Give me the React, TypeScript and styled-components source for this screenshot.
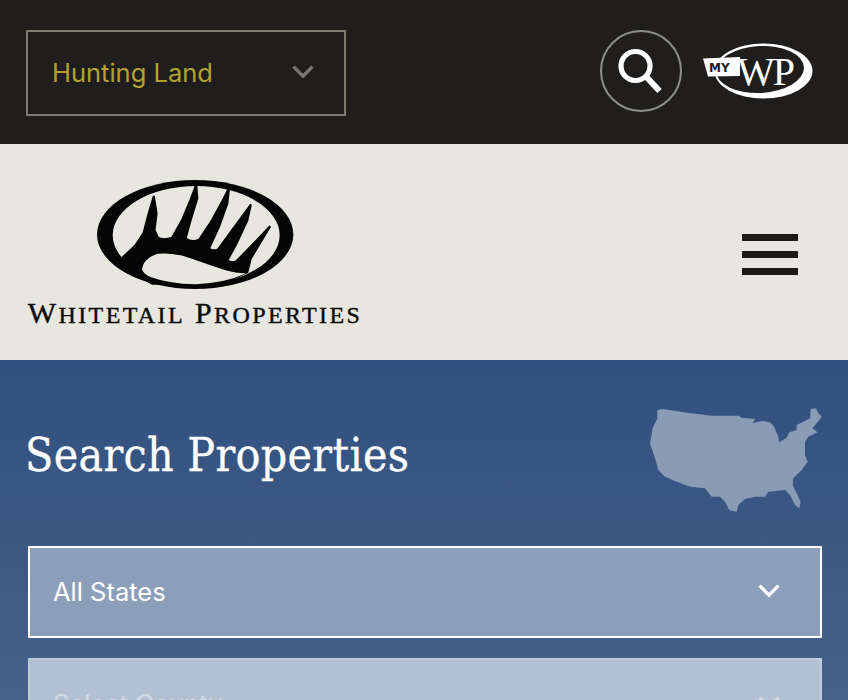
import React from "react";
import styled, { createGlobalStyle } from "styled-components";

const Global = createGlobalStyle`
  html, body { margin: 0; padding: 0; background: #38547f; }
  #root { width: 848px; height: 700px; overflow: hidden; }
`;

const Page = styled.div`
  width: 848px;
  height: 700px;
  overflow: hidden;
  display: flex;
  flex-direction: column;
  font-family: "Inter", "Liberation Sans", sans-serif;
`;

const TopBar = styled.div`
  height: 144px;
  flex: none;
  box-sizing: border-box;
  background: #1f1e1c;
  display: flex;
  align-items: center;
  justify-content: space-between;
  padding: 0 35px 0 26px;
`;

const TopSelect = styled.div`
  width: 320px;
  height: 86px;
  margin-top: 2px;
  box-sizing: border-box;
  border: 2px solid #7c7c72;
  display: flex;
  align-items: center;
  justify-content: space-between;
  padding: 0 30px 2px 24px;
  color: #b3a32e;
  font-size: 25.5px;
  font-weight: 400;
  letter-spacing: 0;
`;

const TopActions = styled.div`
  display: flex;
  align-items: center;
  gap: 21px;
  margin-bottom: 2px;
`;

const SearchButton = styled.div`
  width: 82px;
  height: 82px;
  box-sizing: border-box;
  border: 2px solid #8e8e88;
  border-radius: 50%;
  display: flex;
  align-items: center;
  justify-content: center;
`;

const Header = styled.div`
  height: 216px;
  flex: none;
  box-sizing: border-box;
  background: #e7e7df;
  display: flex;
  align-items: flex-start;
  justify-content: space-between;
  padding: 36px 50px 0 26px;
`;

const Brand = styled.div`
  width: 338px;
  display: flex;
  flex-direction: column;
  align-items: center;
`;

const BrandName = styled.div`
  margin-top: 7px;
  font-family: "Liberation Serif", serif;
  font-size: 30px;
  line-height: 34px;
  letter-spacing: 2.4px;
  color: #0a0a0a;
  white-space: nowrap;
  -webkit-text-stroke: 0.4px #0a0a0a;
`;

const BrandSmall = styled.span`
  font-size: 24px;
  text-transform: uppercase;
`;

const Burger = styled.div`
  width: 56px;
  margin-top: 54px;
  display: flex;
  flex-direction: column;
  gap: 10px;
`;

const BurgerBar = styled.span`
  display: block;
  height: 7px;
  background: #1b1a17;
`;

const Search = styled.div`
  flex: 1;
  box-sizing: border-box;
  background: linear-gradient(180deg, #31507f 0%, #4a648e 100%);
  padding: 48px 26px 0 28px;
`;

const TitleRow = styled.div`
  height: 138px;
  display: flex;
  align-items: flex-start;
  justify-content: space-between;
`;

const Title = styled.h1`
  margin: 20px 0 0 -3px;
  font-family: "DejaVu Serif Condensed", "DejaVu Serif", serif;
  font-weight: 400;
  font-size: 46px;
  line-height: 54px;
  letter-spacing: 0.3px;
  color: #fff;
  white-space: nowrap;
  -webkit-text-stroke: 0.3px #fff;
`;

const MapIcon = styled.svg`
  width: 200px;
  height: 130px;
  margin: -13px -8px 0 0;
  flex: none;
`;

const Field = styled.div<{ $disabled?: boolean }>`
  height: 92px;
  box-sizing: border-box;
  margin-bottom: 20px;
  border: 2px solid ${(p) => (p.$disabled ? "#c0cbda" : "#ffffff")};
  background: ${(p) => (p.$disabled ? "#b3c0d3" : "#8c9fba")};
  color: ${(p) => (p.$disabled ? "#d3dbe6" : "#ffffff")};
  display: flex;
  align-items: center;
  justify-content: space-between;
  padding: 0 40px 2px 23px;
  font-size: 25.5px;
  font-weight: 400;
  letter-spacing: 0;
`;

const Chevron = ({ color, w = 22 }: { color: string; w?: number }) => (
  <svg width={w} height={w * 0.6} viewBox="0 0 22 13" fill="none">
    <path d="M1.5 1.5 L11 11 L20.5 1.5" stroke={color} strokeWidth="3.4" />
  </svg>
);

const SearchIcon = () => (
  <svg width="46" height="46" viewBox="0 0 46 46" fill="none" stroke="#fff" style={{ marginTop: -1 }}>
    <circle cx="17.5" cy="18" r="14.5" strokeWidth="5.2" />
    <path d="M28 28.5 L41.5 43" strokeWidth="6" />
  </svg>
);

const MyWp = () => (
  <svg width="110" height="56" viewBox="0 0 110 56" fill="none">
    <ellipse cx="60.5" cy="28" rx="49" ry="27.5" fill="#fff" />
    <ellipse cx="57" cy="26.5" rx="44" ry="23.5" fill="#1f1e1c" transform="rotate(-3 57 26.5)" />
    <text x="34" y="42" fontFamily="'Liberation Serif', serif" fontSize="40" fill="#fff" letterSpacing="-2">WP</text>
    <path d="M0 15.5 L37 14 L37 33 L5 33.5 Z" fill="#fff" />
    <text x="6" y="28.5" fontFamily="'DejaVu Sans', sans-serif" fontWeight="700" fontSize="12" fill="#1f1e1c">MY</text>
  </svg>
);

const AntlerLogo = () => (
  <svg width="197" height="109" viewBox="265 30 590 326">
    <ellipse cx="559" cy="193" rx="294" ry="163" fill="#050505" />
    <ellipse cx="562" cy="195" rx="250" ry="147" fill="#e7e7df" />
    <path
      d="M338 266 L380 226 L405 188 L420 130 L435 80 L443 130 L437 180 L447 203 Q465 212 490 203 L520 150 L545 90 L562 45 L565 85 L545 150 L530 205 Q550 220 572 208 L610 150 L645 85 L660 55 L655 100 L630 170 L600 235 Q612 245 628 238 L670 180 L725 105 L715 150 L680 225 L655 270 Q668 282 684 272 L730 225 L782 170 L755 215 L725 265 L715 305 L640 340 L430 340 L345 290 Z"
      fill="#050505"
      stroke="#050505"
      strokeWidth="7"
      strokeLinejoin="round"
    />
    <path
      d="M400 297 Q404 264 447 251 Q490 245 545 264 Q610 287 650 300 Q685 310 712 309 Q650 338 560 342 Q480 340 425 320 Q402 310 400 297 Z"
      fill="#e7e7df"
    />
  </svg>
);

const UsMap = () => (
  <MapIcon viewBox="0 0 600 390">
    <path
      d="M82 45 L100 42 L160 52 L245 62 L325 62 L335 68 L375 72 L368 85 L395 78 L420 82 L432 95 L445 125 L447 142 L470 128 L478 112 L500 105 L500 90 L520 80 L540 70 L542 42 L558 40 L565 55 L575 65 L560 85 L548 100 L562 112 L535 125 L525 140 L525 180 L533 200 L515 225 L490 250 L488 270 L500 295 L512 320 L508 340 L495 330 L480 300 L465 285 L440 288 L415 290 L405 305 L375 305 L345 312 L325 330 L320 350 L298 345 L285 320 L270 305 L245 305 L225 280 L180 275 L135 258 L105 245 L85 225 L75 190 L60 145 L68 100 L82 70 Z"
      fill="#8a9bb6"
    />
  </MapIcon>
);

export default function App() {
  return (
    <Page>
      <Global />
      <TopBar>
        <TopSelect>
          <span>Hunting Land</span>
          <Chevron color="#77776f" />
        </TopSelect>
        <TopActions>
          <SearchButton>
            <SearchIcon />
          </SearchButton>
          <MyWp />
        </TopActions>
      </TopBar>
      <Header>
        <Brand>
          <AntlerLogo />
          <BrandName>
            W<BrandSmall>hitetail</BrandSmall> P<BrandSmall>roperties</BrandSmall>
          </BrandName>
        </Brand>
        <Burger>
          <BurgerBar />
          <BurgerBar />
          <BurgerBar />
        </Burger>
      </Header>
      <Search>
        <TitleRow>
          <Title>Search Properties</Title>
          <UsMap />
        </TitleRow>
        <Field>
          <span>All States</span>
          <Chevron color="#ffffff" />
        </Field>
        <Field $disabled>
          <span>Select County</span>
          <Chevron color="#d3dbe6" />
        </Field>
      </Search>
    </Page>
  );
}
